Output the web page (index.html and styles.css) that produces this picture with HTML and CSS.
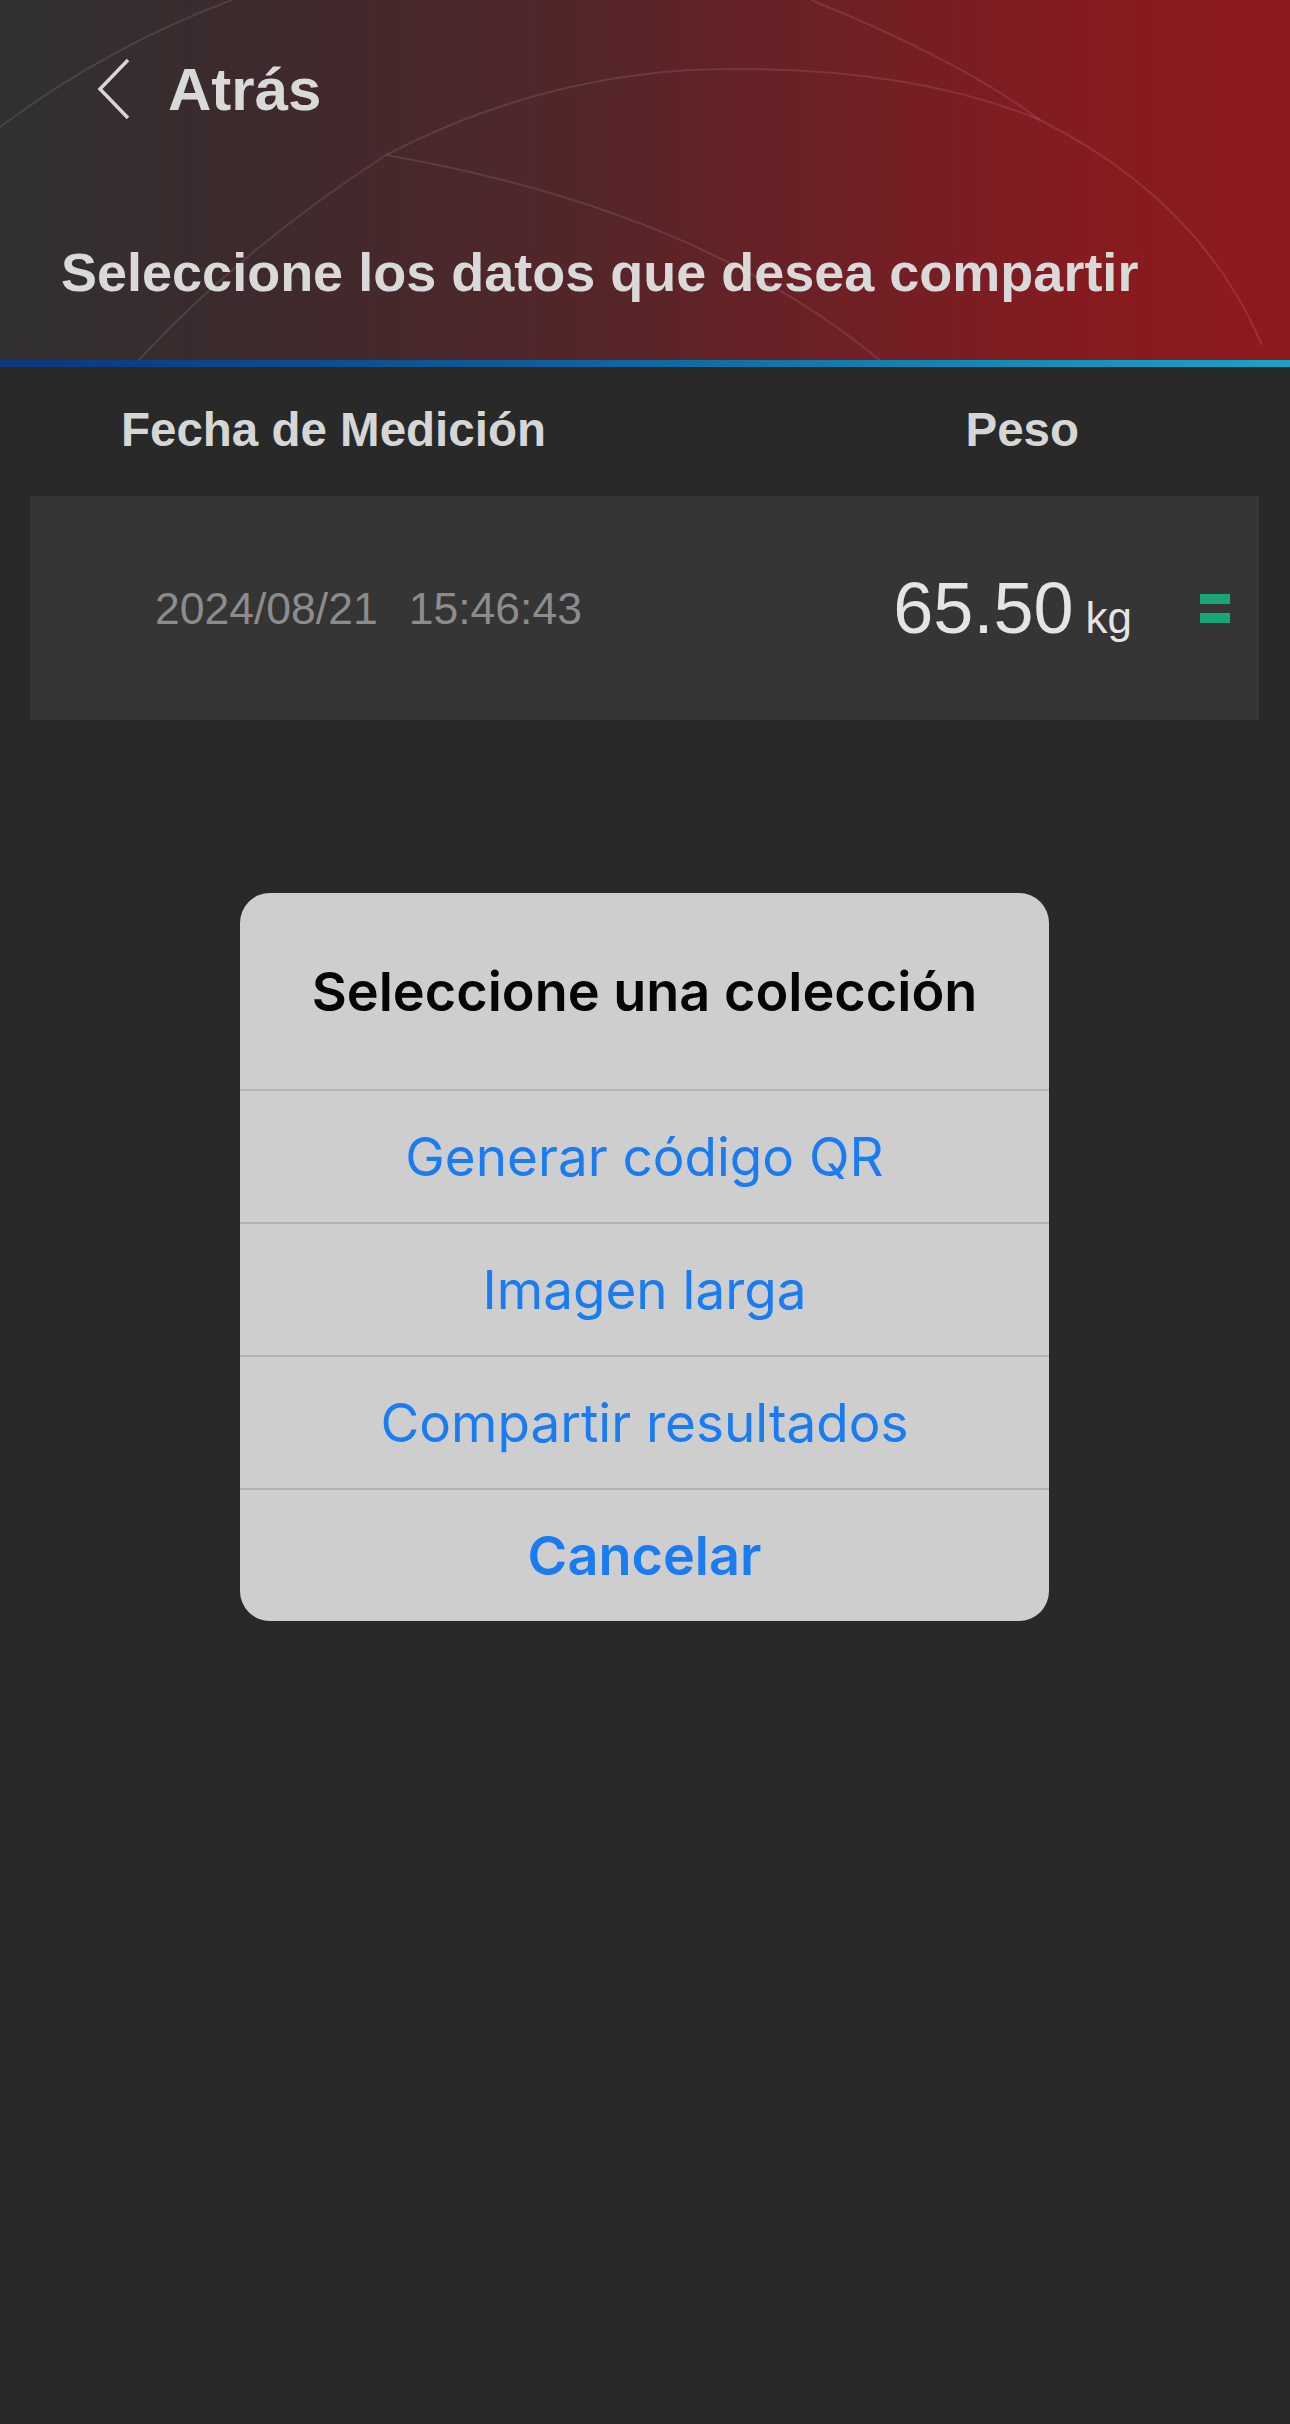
FILE: index.html
```html
<!DOCTYPE html>
<html lang="es">

<head>
    <meta charset="UTF-8">
    <meta name="viewport" content="width=device-width, initial-scale=1.0">
    <title>Compartir datos</title>
    <link rel="stylesheet" href="styles.css">
</head>

<body>

    <div class="header">
        <svg class="header-lines" viewBox="0 0 1290 360" preserveAspectRatio="none">
            <path d="M0 127 Q 110 45 232 0" />
            <path d="M386 155 Q 530 80 690 70 Q 900 62 1040 120 Q 1200 200 1262 345" />
            <path d="M386 155 Q 700 210 882 362" />
            <path d="M386 155 Q 240 250 137 362" />
            <path d="M811 0 Q 960 60 1040 120" />
        </svg>
        <div class="nav">
            <svg class="back-icon" viewBox="0 0 34 62">
                <path d="M31 2 L3 31 L31 60" />
            </svg>
            <span class="back-text">Atrás</span>
        </div>
        <h1 class="page-title">Seleccione los datos que desea compartir</h1>
    </div>
    <div class="accent-bar"></div>

    <div class="table-head">
        <span class="col-date">Fecha de Medición</span>
        <span class="col-weight">Peso</span>
    </div>

    <div class="record">
        <div class="record-date">
            <span>2024/08/21</span>
            <span>15:46:43</span>
        </div>
        <div class="record-weight">
            <span class="value">65.50</span>
            <span class="unit">kg</span>
        </div>
        <div class="trend-icon">
            <span></span>
            <span></span>
        </div>
    </div>

    <div class="dialog">
        <div class="dialog-title">Seleccione una colección</div>
        <div class="dialog-btn">Generar código QR</div>
        <div class="dialog-btn">Imagen larga</div>
        <div class="dialog-btn">Compartir resultados</div>
        <div class="dialog-btn cancel">Cancelar</div>
    </div>

</body>

</html>
```

FILE: styles.css
```css
body {
    margin: 0;
    width: 1290px;
    height: 2424px;
    background-color: #292929;
    font-family: "Liberation Sans", Arial, sans-serif;
    position: relative;
    overflow: hidden;
}

.header {
    position: relative;
    height: 360px;
    background: linear-gradient(to right, #303030 0%, #3d2a2c 20%, #532629 45%, #6e2025 65%, #861b20 85%, #8f191d 100%);
    overflow: hidden;
}

.header-lines {
    position: absolute;
    left: 0;
    top: 0;
    width: 1290px;
    height: 360px;
}

.header-lines path {
    fill: none;
    stroke: rgba(255, 255, 255, 0.1);
    stroke-width: 2;
}

.nav {
    position: relative;
    display: flex;
    align-items: center;
    padding: 58px 0 0 97px;
    height: 62px;
}

.back-icon {
    width: 34px;
    height: 62px;
}

.back-icon path {
    fill: none;
    stroke: #d6d6d6;
    stroke-width: 3.5;
}

.back-text {
    margin-left: 37px;
    font-size: 60px;
    font-weight: bold;
    color: #d9d9d9;
}

.page-title {
    position: relative;
    margin: 0;
    padding: 0 0 0 61px;
    margin-top: 121px;
    font-size: 54px;
    font-weight: bold;
    color: #d9d9d9;
    line-height: 1.15;
}

.accent-bar {
    height: 7px;
    background: linear-gradient(to right, #0b3682 0%, #0d5c9c 40%, #1487b6 75%, #1ba2c8 100%);
}

.table-head {
    display: flex;
    align-items: center;
    height: 129px;
    padding-left: 121px;
    font-size: 47.5px;
    font-weight: bold;
    color: #d6d6d6;
    padding-bottom: 4px;
    box-sizing: border-box;
}

.col-date {
    flex: 1;
}

.col-weight {
    margin-right: 211px;
}

.record {
    display: flex;
    align-items: center;
    height: 224px;
    margin: 0 31px 0 30px;
    padding: 0 29px 0 125px;
    background-color: #353535;
}

.record-date {
    flex: 1;
    display: flex;
    gap: 31px;
    font-size: 44.5px;
    color: #8c8c8c;
    padding-top: 2px;
}

.record-weight {
    display: flex;
    align-items: baseline;
    color: #e4e4e4;
    margin-right: 68px;
}

.record-weight .value {
    font-size: 72px;
}

.record-weight .unit {
    font-size: 44px;
    margin-left: 12px;
}

.trend-icon {
    display: flex;
    flex-direction: column;
    gap: 9px;
}

.trend-icon span {
    display: block;
    width: 30px;
    height: 10px;
    background-color: #19a677;
}

.dialog {
    position: absolute;
    left: 240px;
    top: 893px;
    width: 809px;
    background-color: #cecece;
    border-radius: 30px;
    overflow: hidden;
    font-family: Inter, "Noto Sans", sans-serif;
}

.dialog-title {
    height: 196px;
    display: flex;
    align-items: center;
    justify-content: center;
    font-size: 54px;
    font-weight: 600;
    color: #050505;
    border-bottom: 2px solid #b4b4b4;
}

.dialog-btn {
    height: 131px;
    display: flex;
    align-items: center;
    justify-content: center;
    font-size: 53px;
    color: #1a7cf2;
    border-bottom: 2px solid #b4b4b4;
}

.dialog-btn.cancel {
    height: 131px;
    border-bottom: none;
    font-size: 54px;
    font-weight: 600;
}
```
